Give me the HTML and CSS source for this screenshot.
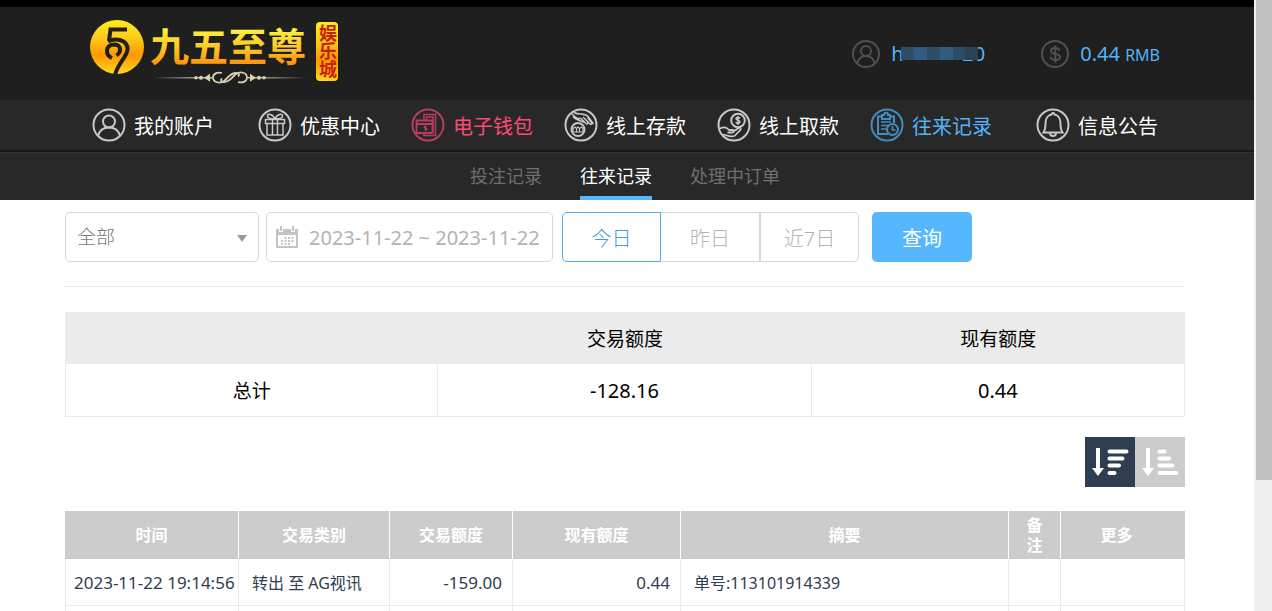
FILE: index.html
```html
<!DOCTYPE html>
<html lang="zh-CN">
<head>
    <meta charset="UTF-8">
    <meta name="viewport" content="width=device-width, initial-scale=1.0">
    <title>往来记录</title>
    <link rel="stylesheet" href="styles.css">
</head>
<body>
    <div class="page">
        <div class="content">
            <header class="header">
                <div class="container top-bar">
                    <a href="#" class="logo">
                        <svg width="252" height="70" viewBox="0 0 252 70">
                            <defs>
                                <linearGradient id="gold" x1="0" y1="0" x2="0" y2="1">
                                    <stop offset="0" stop-color="#ffee1c"/>
                                    <stop offset="0.35" stop-color="#fcc81a"/>
                                    <stop offset="0.65" stop-color="#fd9800"/>
                                    <stop offset="1" stop-color="#ffd81c"/>
                                </linearGradient>
                                <linearGradient id="goldText" x1="0" y1="0" x2="0" y2="1">
                                    <stop offset="0.2" stop-color="#fdf03a"/>
                                    <stop offset="0.55" stop-color="#fcc624"/>
                                    <stop offset="0.9" stop-color="#fb8c0c"/>
                                </linearGradient>
                                <linearGradient id="line">
                                    <stop offset="0" stop-color="#d9d2b0" stop-opacity="0"/>
                                    <stop offset="0.4" stop-color="#d9d2b0"/>
                                    <stop offset="0.6" stop-color="#d9d2b0"/>
                                    <stop offset="1" stop-color="#d9d2b0" stop-opacity="0"/>
                                </linearGradient>
                            </defs>
                            <circle cx="27" cy="28" r="27" fill="url(#gold)"/>
                            <g fill="none" stroke="#201f1d" stroke-width="4">
                                <path d="M37 10.500H20.500L19 22M18 22.500c7-4 20-2 19.500 8C37 38 28 44 25 56"/>
                                <path d="M22 39c-7-3-7-13 2-13.500 7 0 8 7 2.500 11"/>
                            </g>
                            <text class="logo-name" x="60" y="42" fill="url(#goldText)">九五至尊</text>
                            <rect x="62" y="58" width="154" height="1.500" fill="url(#line)"/>
                            <rect x="122" y="52" width="36" height="12" fill="#1f1f1f"/>
                            <g fill="none" stroke="#d9d2b0" stroke-width="1.800">
                                <path d="M132 54c-5-1.500-9 1-9 4.500 0 5 7 6.500 11 3.500 4-3 6-8 12-8 3 0 4 2 2 3.500"/>
                                <path d="M148 63c5 1.500 9-1 9-4.500 0-5-7-6.500-11-3.500-4 3-6 8-12 8-3 0-4-2-2-3.500"/>
                            </g>
                            <g fill="#d9d2b0">
                                <circle cx="106" cy="58.700" r="1.800"/><circle cx="111" cy="58.700" r="2"/>
                                <path d="M114 58.700l6-4v8zM166 58.700l-6-4v8z"/>
                                <circle cx="169" cy="58.700" r="2"/><circle cx="174" cy="58.700" r="1.800"/>
                            </g>
                            <rect x="226" y="3" width="22" height="59" rx="4" fill="url(#gold)"/>
                            <text class="logo-tag" x="237" y="5">娱乐城</text>
                        </svg>
                    </a>
                    <div class="account">
                        <div class="account-item">
                            <svg class="account-icon" viewBox="0 0 28 28">
                                <circle cx="14" cy="14" r="13"/>
                                <circle cx="14" cy="11" r="5"/>
                                <path d="M5.500 23c1-4.500 4.500-7 8.500-7s7.500 2.500 8.500 7"/>
                            </svg>
                            <div class="user-name">
                                <span>h</span><span>20</span>
                                <div class="mosaic"><i></i><i></i><i></i><i></i><i></i><i></i></div>
                            </div>
                        </div>
                        <div class="account-item">
                            <svg class="account-icon" viewBox="0 0 28 28">
                                <circle cx="14" cy="14" r="13"/>
                                <path d="M18.500 10.500c-.5-2-2.500-2.500-4.500-2.500s-4 1-4 3c0 4.500 9 1.500 9 6 0 2-2 3-4.500 3s-4.500-.8-5-3M14.300 5.500v17"/>
                            </svg>
                            <div class="balance">0.44 <small>RMB</small></div>
                        </div>
                    </div>
                </div>
            </header>

            <nav class="main-nav">
                <div class="container main-nav-list">
                    <a href="#">
                        <svg viewBox="0 0 34 34">
                            <circle cx="17" cy="17" r="15.500"/>
                            <circle cx="17" cy="13.500" r="6"/>
                            <path d="M6 28c1.500-6 6-8.500 11-8.500s9.500 2.500 11 8.500"/>
                        </svg>
                        我的账户
                    </a>
                    <a href="#">
                        <svg viewBox="0 0 34 34">
                            <circle cx="17" cy="17" r="15.500"/>
                            <path d="M7.500 11.500h19v4h-19zM9 15.500h16V27H9zM14.500 11.500V27M19.500 11.500V27" stroke-width="1.500"/>
                            <path d="M17 11c-2-5-7.500-6-7.500-3 0 2 3 3 7.500 3zM17 11c2-5 7.500-6 7.500-3 0 2-3 3-7.500 3z" stroke-width="1.500"/>
                        </svg>
                        优惠中心
                    </a>
                    <a href="#" class="wallet">
                        <svg viewBox="0 0 34 34">
                            <circle cx="17" cy="17" r="15.500"/>
                            <path d="M13 12V6.500h11.500v21H13V25M15.500 12V9H22v15" stroke-width="1.500"/>
                            <path d="M5.500 12.500h16V25h-16zM5.500 16h16" stroke-width="1.800"/>
                            <path d="M15.500 18.500c-3-1-3 1.500-1 1.700 2 .3 2 2.500-1 1.500M14.400 17.500v5.500" stroke-width="1.200"/>
                        </svg>
                        电子钱包
                    </a>
                    <a href="#">
                        <svg viewBox="0 0 34 34">
                            <circle cx="17" cy="17" r="15.500"/>
                            <circle cx="14" cy="21.500" r="6.500"/>
                            <path d="M9 24v-3.500l2-1.500 1.500 1.500L14 19l1.500 1.500L17.500 19l1.500 1.500V24zM12.500 21v3M15.500 21v3" stroke-width="1.200"/>
                            <path d="M8 6c3 3 5 5 9 4.500l5 5c1 1 2.500 0 1.500-1.500M10 4.500c5 3 10 0 14 4l5.500 7.500M19 9l7 7c1 1 2.500 0 1.500-1.500l-4-5M9 8.500c3 4 8 4 11 6" stroke-width="1.500"/>
                        </svg>
                        线上存款
                    </a>
                    <a href="#">
                        <svg viewBox="0 0 34 34">
                            <circle cx="17" cy="17" r="15.500"/>
                            <circle cx="21" cy="12.500" r="6.800"/>
                            <path d="M23 10.500c-1-1.500-4-1.200-4 .3 0 2 4 1 4 3 0 1.700-3.500 2-4.200.3M21 8v9" stroke-width="1.500"/>
                            <path d="M3 20.500c4-2 7-1 9 1.500h3.500c1.500 0 1.500 2.500 0 2.500h-5M16.500 23.500l5-3.500c1.500-1 3 .5 1.800 2L18 27.500c-1.500 1.500-6 1-8 0l-4-1" stroke-width="1.800"/>
                        </svg>
                        线上取款
                    </a>
                    <a href="#" class="active">
                        <svg viewBox="0 0 34 34">
                            <circle cx="17" cy="17" r="15.500"/>
                            <path d="M12 8.500H8v17.500h10M20 8.500h4V15M12 7h2c0-3 4-3 4 0h2v4h-8z" stroke-width="2"/>
                            <path d="M11 14h10M11 17.500h7M11 21h5" stroke-width="1.500"/>
                            <circle cx="22.500" cy="21.500" r="5.500"/>
                            <path d="M22.500 18v4h3" stroke-width="1.500"/>
                        </svg>
                        往来记录
                    </a>
                    <a href="#">
                        <svg viewBox="0 0 34 34">
                            <circle cx="17" cy="17" r="15.500"/>
                            <path d="M7.500 24.500c2.500-4 2-6 2-9.500 0-5 3-8 6-8.500 0-2 3-2 3 0 3 .5 6 3.500 6 8.500 0 3.500-.5 5.500 2 9.500z"/>
                            <path d="M14 25c0 4 6 4 6 0"/>
                        </svg>
                        信息公告
                    </a>
                </div>
            </nav>

            <nav class="sub-nav">
                <div class="container sub-nav-list">
                    <a href="#">投注记录</a>
                    <a href="#" class="active">往来记录</a>
                    <a href="#">处理中订单</a>
                </div>
            </nav>

            <main class="container">
                <form class="filters">
                    <div class="type-box">
                        <select class="type-select" aria-label="交易类别">
                            <option>全部</option>
                        </select>
                    </div>
                    <label class="date-box">
                        <svg width="22" height="22" viewBox="0 0 22 22" fill="#c4c4c4">
                            <path d="M0 3h22v19H0zM2 9v11h18V9z" fill-rule="evenodd"/>
                            <path d="M3 0h4v6H3zM15 0h4v6h-4z" fill="#fff"/>
                            <path d="M4 0h2v5H4zM16 0h2v5h-2z"/>
                            <path d="M8.500 11h2v2h-2zM12 11h2v2h-2zM15.500 11h2v2h-2zM5 14h2v2H5zM8.500 14h2v2h-2zM12 14h2v2h-2zM15.500 14h2v2h-2zM5 17h2v2H5zM8.500 17h2v2h-2zM12 17h2v2h-2z"/>
                        </svg>
                        <input type="text" aria-label="日期" value="2023-11-22 ~ 2023-11-22">
                    </label>
                    <div class="day-group">
                        <button type="button" class="active">今日</button>
                        <button type="button">昨日</button>
                        <button type="button">近7日</button>
                    </div>
                    <button type="button" class="search-button">查询</button>
                </form>

                <table class="summary">
                    <thead>
                        <tr><th></th><th>交易额度</th><th>现有额度</th></tr>
                    </thead>
                    <tbody>
                        <tr><td>总计</td><td class="number">-128.16</td><td class="number">0.44</td></tr>
                    </tbody>
                </table>

                <div class="sort">
                    <button type="button" class="active" aria-label="降序">
                        <svg width="50" height="50" viewBox="0 0 50 50">
                            <path d="M13 11v21" stroke-linecap="butt"/>
                            <path d="M24.500 14.500h17M24.500 21.500h13M24.500 28.500h9.500M24.500 36h5"/>
                            <path d="M7 31h12l-6 8z" class="arrow"/>
                        </svg>
                    </button>
                    <button type="button" aria-label="升序">
                        <svg width="50" height="50" viewBox="0 0 50 50">
                            <path d="M13 11v21" stroke-linecap="butt"/>
                            <path d="M24.500 14.500h5M24.500 21.500h9.500M24.500 28.500h13M24.500 36h17"/>
                            <path d="M7 31h12l-6 8z" class="arrow"/>
                        </svg>
                    </button>
                </div>

                <table class="records">
                    <colgroup>
                        <col class="col-time">
                        <col class="col-type">
                        <col class="col-amount">
                        <col class="col-balance">
                        <col>
                        <col class="col-note">
                        <col class="col-more">
                    </colgroup>
                    <thead>
                        <tr>
                            <th>时间</th>
                            <th>交易类别</th>
                            <th>交易额度</th>
                            <th>现有额度</th>
                            <th>摘要</th>
                            <th>备注</th>
                            <th>更多</th>
                        </tr>
                    </thead>
                    <tbody>
                        <tr>
                            <td class="time">2023-11-22 19:14:56</td>
                            <td>转出 至 AG视讯</td>
                            <td class="number">-159.00</td>
                            <td class="number">0.44</td>
                            <td>单号:113101914339</td>
                            <td></td>
                            <td></td>
                        </tr>
                        <tr><td></td><td></td><td></td><td></td><td></td><td></td><td></td></tr>
                    </tbody>
                </table>
            </main>
        </div>
        <div class="scrollbar"><div class="thumb"></div></div>
    </div>
</body>
</html>
```

FILE: styles.css
```css
* {
    margin: 0;
    padding: 0;
    box-sizing: border-box;
}

body {
    font-family: "Noto Sans", "Open Sans", "Noto Sans CJK SC", sans-serif;
    font-size: 16px;
    color: #000;
    background: #fff;
}

a {
    color: inherit;
    text-decoration: none;
}

button,
input,
select {
    font-family: inherit;
    font-size: 20px;
    cursor: pointer;
}

.page {
    display: flex;
    height: 100vh;
    overflow: hidden;
}

.content {
    flex: 1;
    min-width: 0;
}

.container {
    width: calc(100% - 134px);
    margin-left: 65px;
}

/* header */
.header {
    background: #1f1f1f;
    border-top: 7px solid #000;
}

.top-bar {
    display: flex;
    justify-content: space-between;
    align-items: center;
    height: 93px;
    padding: 0 25px;
}

.logo svg {
    display: block;
}

.logo-name {
    font-size: 39px;
    font-weight: 700;
}

.logo-tag {
    font-size: 18px;
    font-weight: 700;
    fill: #c8200c;
    writing-mode: vertical-rl;
}

.account {
    display: flex;
    gap: 56px;
    color: #55b2f8;
    font-size: 20px;
}

.account-item {
    display: flex;
    align-items: center;
    gap: 11px;
}

.account-icon {
    width: 28px;
    height: 28px;
    fill: none;
    stroke: #505050;
    stroke-width: 2;
}

.user-name {
    position: relative;
    display: flex;
    justify-content: space-between;
    width: 94px;
}

.mosaic {
    position: absolute;
    top: 7px;
    left: 10px;
    right: 7px;
    height: 13px;
    display: flex;
    background: #2d475c;
}

.mosaic i {
    flex: 1;
    background: #2f4d66;
}

.mosaic i:nth-child(2),
.mosaic i:nth-child(4) {
    background: #315c82;
}

.mosaic i:nth-child(6) {
    background: #2b4155;
}

.balance small {
    font-size: 16px;
}

/* navigation */
.main-nav {
    background: #282828;
    border-bottom: 2px solid #191919;
}

.main-nav-list {
    display: flex;
    justify-content: center;
    gap: 31px;
    height: 50px;
}

.main-nav a {
    display: flex;
    align-items: center;
    gap: 8px;
    color: #fff;
    font-size: 20px;
    white-space: nowrap;
}

.main-nav a:first-child {
    margin-right: 13px;
}

.main-nav a:last-child {
    margin-left: 13px;
}

.main-nav svg {
    width: 34px;
    height: 34px;
    fill: none;
    stroke: #c8c8c8;
    stroke-width: 2;
}

.main-nav .wallet {
    color: #fb4a73;
}

.main-nav .wallet svg {
    stroke: #b83c5b;
}

.main-nav .active {
    color: #55b2f8;
}

.main-nav .active svg {
    stroke: #438cbd;
}

.sub-nav {
    background: #282828;
    border-top: 1px solid #343434;
}

.sub-nav-list {
    display: flex;
    justify-content: center;
    gap: 38px;
}

.sub-nav a {
    height: 47px;
    line-height: 46px;
    font-size: 18px;
    color: #6f6f6f;
}

.sub-nav .active {
    color: #fff;
    border-bottom: 4px solid #56b7ff;
}

/* filters */
.filters {
    display: flex;
    padding: 12px 0 24px;
    border-bottom: 1px solid #e8e8e8;
}

.type-box {
    position: relative;
    width: 194px;
    margin-right: 7px;
}

.type-box::after {
    content: "";
    position: absolute;
    top: 23px;
    right: 12px;
    border: 5px solid transparent;
    border-top: 7px solid #999;
    border-bottom: 0;
    pointer-events: none;
}

.type-select {
    width: 100%;
    height: 50px;
    padding: 0 11px;
    appearance: none;
    color: #777;
    font-size: 19px;
    font-weight: 300;
    background: #fff;
    border: 1px solid #d7d7d7;
    border-radius: 5px;
}

.date-box {
    display: flex;
    align-items: center;
    gap: 11px;
    width: 287px;
    height: 50px;
    padding: 0 9px;
    margin-right: 9px;
    border: 1px solid #d7d7d7;
    border-radius: 5px;
}

.date-box svg {
    flex-shrink: 0;
}

.date-box input {
    flex: 1;
    min-width: 0;
    color: #b3b3b3;
    border: 0;
    outline: 0;
}

.day-group {
    display: flex;
    margin-right: 13px;
}

.day-group button {
    width: 99px;
    height: 50px;
    color: #b4b4b4;
    font-weight: 300;
    background: #fff;
    border: 1px solid #d7d7d7;
}

.day-group button:first-child {
    border-radius: 5px 0 0 5px;
}

.day-group button:last-child {
    border-radius: 0 5px 5px 0;
}

.day-group .active {
    color: #3f9ce0;
    border-color: #56a9e6;
}

.day-group .active + button {
    border-left: 0;
}

.search-button {
    width: 100px;
    height: 50px;
    color: #fff;
    background: #56b7ff;
    border: 0;
    border-radius: 5px;
}

/* tables */
table {
    width: 100%;
    table-layout: fixed;
    border-collapse: separate;
    border-spacing: 0;
}

td {
    border: solid #ebebeb;
    border-width: 0 1px 1px 0;
}

td:first-child {
    border-left-width: 1px;
}

.summary {
    margin-top: 25px;
    font-size: 19px;
    text-align: center;
}

.summary th {
    height: 52px;
    font-weight: 400;
    background: #ebebeb;
}

.summary td {
    height: 53px;
}

.summary .number {
    font-size: 20px;
}

.sort {
    display: flex;
    justify-content: flex-end;
    margin: 20px 0 24px;
}

.sort button {
    width: 50px;
    height: 50px;
    background: #ccc;
    border: 0;
}

.sort .active {
    background: #2e3d50;
}

.sort svg {
    display: block;
    stroke: #fff;
    stroke-width: 4;
    stroke-linecap: round;
}

.sort .arrow {
    fill: #fff;
    stroke: none;
}

.col-time {
    width: 174px;
}

.col-type {
    width: 151px;
}

.col-amount {
    width: 123px;
}

.col-balance {
    width: 168px;
}

.col-note {
    width: 52px;
}

.col-more {
    width: 124px;
}

.records th {
    height: 48px;
    padding: 0 16px;
    color: #fff;
    line-height: 20px;
    background: #ccc;
    border-right: 1px solid #fff;
}

.records th:last-child {
    padding-right: 28px;
    border-right-color: #ccc;
}

.records td {
    height: 47px;
    padding: 0 13px;
    color: #2e3d50;
    white-space: nowrap;
}

.records .time {
    padding: 0 8px;
    font-size: 17px;
}

.records .number {
    padding: 0 10px;
    font-size: 17px;
    text-align: right;
}

/* scrollbar */
.scrollbar {
    width: 18px;
    padding-left: 2px;
    background: #f0f0f0;
}

.thumb {
    height: 480px;
    background: #c1c1c1;
}
```
